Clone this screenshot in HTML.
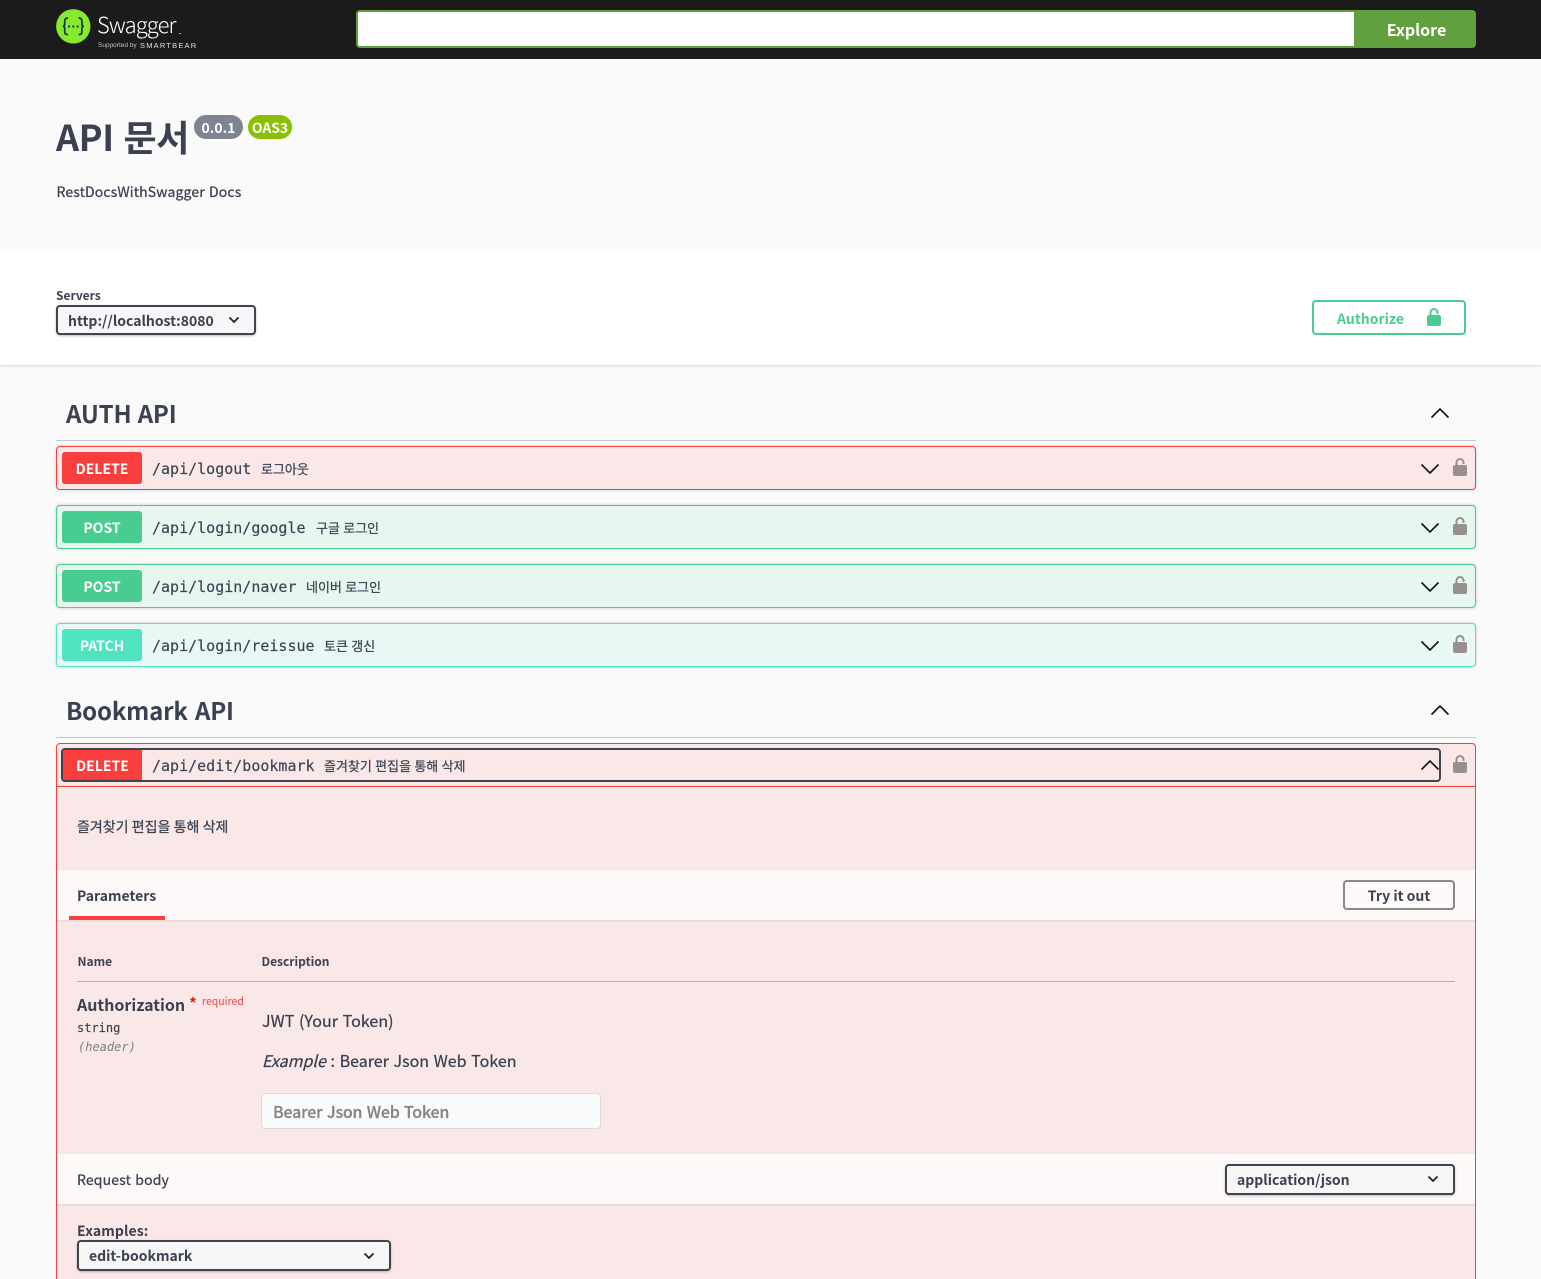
<!DOCTYPE html>
<html lang="en"><head><meta charset="utf-8"><title>Swagger UI</title>
<style>
*{box-sizing:border-box}
html,body{margin:0;padding:0;width:1541px;height:1279px;overflow:hidden;background:#fafafa}
body{position:relative;font-family:"Noto Sans CJK JP","Noto Sans CJK KR","Liberation Sans",sans-serif;color:#3b4151}
.a{position:absolute;white-space:nowrap}
.med{-webkit-text-stroke:.25px currentColor}
.bar{position:absolute;left:56px;width:1420px;height:44px;border:1px solid;border-radius:4px;box-shadow:0 0 3px rgba(0,0,0,.19)}
.del{border-color:#f93e3e;background:#fae8e8}
.post{border-color:#49cc90;background:#e8f6f0}
.patch{border-color:#50e3c2;background:#e9f8f5}
.m{position:absolute;left:62px;width:80px;height:32px;border-radius:3px;color:#fff;font-weight:700;font-size:14px;line-height:34px;text-align:center}
.p{position:absolute;left:152px;font-family:"DejaVu Sans Mono",monospace;font-size:15px;line-height:20px;white-space:nowrap;color:#3b4151;-webkit-text-stroke:.15px currentColor}
.s{position:absolute;font-size:13px;line-height:20px;white-space:nowrap;color:#3b4151;word-spacing:.4px;-webkit-text-stroke:.2px currentColor}
.h{position:absolute;font-size:24px;font-weight:700;line-height:32px;white-space:nowrap;letter-spacing:-.18px}
.line{position:absolute;left:56px;width:1420px;height:1px;background:#c6c7cc}
svg{position:absolute;display:block}
.sel{position:absolute;background:#f7f7f7;border:2px solid #41444e;border-radius:4px;box-shadow:0 1px 2px 0 rgba(0,0,0,.25);font-weight:700;font-size:14px;line-height:28px;padding-left:10px;white-space:nowrap}
</style></head><body>

<div class="a" style="left:0;top:0;width:1541px;height:59px;background:#1b1b1b"></div>
<svg style="left:56px;top:9px" width="35" height="35" viewBox="0 0 35 35"><circle cx="17.300" cy="17.300" r="17.200" fill="#85ea2d"/><path d="M12 9c-2.600 0-3.300 1.200-3.300 3.200v3.200c0 1.200-.8 1.900-2 1.900 1.200 0 2 .7 2 1.900v3.300c0 2 .7 3.200 3.300 3.200M22.600 9c2.600 0 3.300 1.200 3.300 3.200v3.200c0 1.200.8 1.900 2 1.900-1.200 0-2 .7-2 1.900v3.300c0 2-.7 3.200-3.300 3.200" fill="none" stroke="#173647" stroke-width="1.700"/><circle cx="13" cy="17.500" r="1.100" fill="#173647"/><circle cx="17.300" cy="17.500" r="1.100" fill="#173647"/><circle cx="21.600" cy="17.500" r="1.100" fill="#173647"/></svg>
<div class="a" style="left:97px;top:8px;font-size:22px;line-height:32px;color:#fff;font-weight:300;letter-spacing:-.9px">Swagger</div>
<div class="a" style="left:179px;top:33px;width:2px;height:1px;background:#aaa"></div>
<div class="a" style="left:98px;top:41px;font-size:6.500px;line-height:10px;color:#c4c4c4;font-family:'Liberation Sans',sans-serif">Supported by</div>
<div class="a" style="left:140px;top:40px;font-size:7.500px;line-height:11px;color:#e0e0e0;letter-spacing:1.200px;font-family:'Liberation Sans',sans-serif">SMARTBEAR</div>

<div class="a" style="left:356px;top:10px;width:1000px;height:38px;background:#fff;border:2px solid #62a03f;border-right:0;border-radius:4px 0 0 4px"></div>
<div class="a" style="left:1354px;top:10px;width:122px;height:38px;background:#62a03f;border-radius:0 4px 4px 0;color:#fff;font-size:16px;font-weight:700;line-height:38px;text-align:center;padding-left:3px">Explore</div>

<div class="h" style="left:56px;top:111px;font-size:36px;line-height:50px;letter-spacing:-.4px;word-spacing:2px">API 문서</div>
<div class="a" style="left:194px;top:115px;width:49px;height:24px;border-radius:12px;background:#7d8492;color:#fff;font-size:14px;font-weight:700;line-height:26px;text-align:center">0.0.1</div>
<div class="a" style="left:248px;top:115px;width:44px;height:24px;border-radius:12px;background:#89bf04;color:#fff;font-size:14px;font-weight:700;line-height:26px;text-align:center;letter-spacing:-.1px">OAS3</div>
<div class="a med" style="left:56.500px;top:182px;font-size:14px;line-height:21px;letter-spacing:.13px;word-spacing:1px">RestDocsWithSwagger Docs</div>

<div class="a" style="left:0;top:251px;width:1541px;height:114px;background:#fff;box-shadow:0 1px 2px 0 rgba(0,0,0,.15)"></div>
<div class="a" style="left:56px;top:287px;font-size:12px;font-weight:700;line-height:17px">Servers</div>
<div class="sel" style="left:56px;top:305px;width:200px;height:30px">http://localhost:8080</div>
<svg style="left:226px;top:314px" width="16" height="12" viewBox="0 0 16 12"><path d="M3.500 3.500 8 8l4.500-4.500" fill="none" stroke="#222" stroke-width="1.800"/></svg>

<div class="a" style="left:1312px;top:300px;width:154px;height:35px;border:2px solid #49cc90;border-radius:4px;background:#fff"></div>
<div class="a" style="left:1337px;top:309px;font-size:14px;font-weight:700;line-height:21px;color:#49cc90">Authorize</div>
<svg style="left:1425px;top:307px" width="18" height="20" viewBox="0 0 18 20"><path d="M5.500 9V5.500a3.500 3.500 0 0 1 7 0V7" fill="none" stroke="#49cc90" stroke-width="2"/><rect x="2" y="8" width="14" height="11" rx="2" fill="#49cc90"/></svg>

<!-- AUTH API -->
<div class="h" style="left:66px;top:397px;word-spacing:1px">AUTH API</div>
<svg style="left:1430px;top:404px" width="20" height="18" viewBox="0 0 20 18"><path d="M1.500 13.500 10 5l8.500 8.500" fill="none" stroke="#111" stroke-width="1.600"/></svg>
<div class="line" style="top:440px"></div>

<div class="bar del" style="top:446px"></div><div class="m" style="top:452px;background:#f93e3e">DELETE</div>
<div class="p" style="top:459px">/api/logout</div><div class="s" style="left:261px;top:459px">로그아웃</div>
<svg style="left:1420px;top:460px" width="20" height="18" viewBox="0 0 20 18"><path d="M1.500 4.500 10 13l8.500-8.500" fill="none" stroke="#111" stroke-width="1.600"/></svg>
<svg style="left:1452px;top:457px" width="16" height="20" viewBox="0 0 16 20"><path d="M4.500 9V5.500a3.500 3.500 0 0 1 7 0V7" fill="none" stroke="#988f8f" stroke-width="2"/><rect x="1" y="8" width="14" height="11" rx="2" fill="#988f8f"/></svg>

<div class="bar post" style="top:505px"></div><div class="m" style="top:511px;background:#49cc90">POST</div>
<div class="p" style="top:518px">/api/login/google</div><div class="s" style="left:316px;top:518px">구글 로그인</div>
<svg style="left:1420px;top:519px" width="20" height="18" viewBox="0 0 20 18"><path d="M1.500 4.500 10 13l8.500-8.500" fill="none" stroke="#111" stroke-width="1.600"/></svg>
<svg style="left:1452px;top:516px" width="16" height="20" viewBox="0 0 16 20"><path d="M4.500 9V5.500a3.500 3.500 0 0 1 7 0V7" fill="none" stroke="#988f8f" stroke-width="2"/><rect x="1" y="8" width="14" height="11" rx="2" fill="#988f8f"/></svg>

<div class="bar post" style="top:564px"></div><div class="m" style="top:570px;background:#49cc90">POST</div>
<div class="p" style="top:577px">/api/login/naver</div><div class="s" style="left:306px;top:577px">네이버 로그인</div>
<svg style="left:1420px;top:578px" width="20" height="18" viewBox="0 0 20 18"><path d="M1.500 4.500 10 13l8.500-8.500" fill="none" stroke="#111" stroke-width="1.600"/></svg>
<svg style="left:1452px;top:575px" width="16" height="20" viewBox="0 0 16 20"><path d="M4.500 9V5.500a3.500 3.500 0 0 1 7 0V7" fill="none" stroke="#988f8f" stroke-width="2"/><rect x="1" y="8" width="14" height="11" rx="2" fill="#988f8f"/></svg>

<div class="bar patch" style="top:623px"></div><div class="m" style="top:629px;background:#50e3c2">PATCH</div>
<div class="p" style="top:636px">/api/login/reissue</div><div class="s" style="left:324px;top:636px">토큰 갱신</div>
<svg style="left:1420px;top:637px" width="20" height="18" viewBox="0 0 20 18"><path d="M1.500 4.500 10 13l8.500-8.500" fill="none" stroke="#111" stroke-width="1.600"/></svg>
<svg style="left:1452px;top:634px" width="16" height="20" viewBox="0 0 16 20"><path d="M4.500 9V5.500a3.500 3.500 0 0 1 7 0V7" fill="none" stroke="#988f8f" stroke-width="2"/><rect x="1" y="8" width="14" height="11" rx="2" fill="#988f8f"/></svg>

<!-- Bookmark API -->
<div class="h" style="left:66px;top:694px;word-spacing:2px">Bookmark API</div>
<svg style="left:1430px;top:701px" width="20" height="18" viewBox="0 0 20 18"><path d="M1.500 13.500 10 5l8.500 8.500" fill="none" stroke="#111" stroke-width="1.600"/></svg>
<div class="line" style="top:737px"></div>

<div class="a" style="left:56px;top:743px;width:1420px;height:560px;border:1px solid #f93e3e;border-radius:4px;background:#fae8e8"></div>
<div class="a" style="left:57px;top:786px;width:1418px;height:1px;background:#f93e3e"></div>
<div class="a" style="left:61px;top:748px;width:1380px;height:34px;border:2px solid #41444e;border-radius:4px"></div>
<div class="m" style="top:750px;left:63px;width:79px;height:30px;line-height:32px;background:#f93e3e;border-radius:2px 0 0 2px">DELETE</div>
<div class="p" style="top:756px">/api/edit/bookmark</div><div class="s" style="left:324px;top:756px">즐겨찾기 편집을 통해 삭제</div>
<svg style="left:1420px;top:756px" width="20" height="18" viewBox="0 0 20 18"><path d="M1.500 13.500 10 5l8.500 8.500" fill="none" stroke="#111" stroke-width="1.600"/></svg>
<svg style="left:1452px;top:754px" width="16" height="20" viewBox="0 0 16 20"><path d="M4.500 9V5.500a3.500 3.500 0 0 1 7 0V7" fill="none" stroke="#988f8f" stroke-width="2"/><rect x="1" y="8" width="14" height="11" rx="2" fill="#988f8f"/></svg>

<div class="a med" style="left:77px;top:817px;font-size:14px;line-height:20px;word-spacing:.1px">즐겨찾기 편집을 통해 삭제</div>

<div class="a" style="left:57px;top:870px;width:1418px;height:50px;background:#fef9f9;box-shadow:0 1px 2px rgba(0,0,0,.1)"></div>
<div class="a" style="left:77px;top:886px;font-size:14px;font-weight:700;line-height:21px">Parameters</div>
<div class="a" style="left:69px;top:916px;width:96px;height:4px;background:#f93e3e"></div>
<div class="a" style="left:1343px;top:880px;width:112px;height:30px;border:2px solid #888;border-radius:4px;font-size:14px;font-weight:700;line-height:28px;text-align:center;background:#fef9f9">Try it out</div>

<div class="a" style="left:77.500px;top:953px;font-size:12px;font-weight:700;line-height:17px">Name</div>
<div class="a" style="left:261.500px;top:953px;font-size:12px;font-weight:700;line-height:17px">Description</div>
<div class="a" style="left:77px;top:981px;width:1378px;height:1px;background:#b5aeb0"></div>

<div class="a" style="left:77px;top:992px;font-size:16px;font-weight:700;line-height:24px">Authorization</div>
<div class="a" style="left:190px;top:995px;font-size:15px;font-weight:700;line-height:16px;color:#f00;font-family:'Liberation Sans',sans-serif">*</div>
<div class="a" style="left:202px;top:994px;font-size:10.500px;line-height:16px;color:#f93e3e;opacity:.85;-webkit-text-stroke:.15px currentColor">required</div>
<div class="a" style="left:77px;top:1020px;font-family:'DejaVu Sans Mono',monospace;font-size:12px;line-height:17px;-webkit-text-stroke:.15px currentColor">string</div>
<div class="a" style="left:78px;top:1039px;font-family:'DejaVu Sans Mono',monospace;font-size:12px;font-style:italic;line-height:16px;color:#7b7f88">(header)</div>

<div class="a med" style="left:262px;top:1008px;font-size:16px;line-height:24px;letter-spacing:.05px;word-spacing:1px">JWT (Your Token)</div>
<div class="a med" style="left:262px;top:1048px;font-size:16px;line-height:24px;word-spacing:1.100px"><i>Example</i> : Bearer Json Web Token</div>
<div class="a" style="left:261px;top:1093px;width:340px;height:36px;background:#fafafa;border:1px solid #d9d9d9;border-radius:4px;font-size:16px;font-weight:500;line-height:34px;padding-left:11px;color:#868686;letter-spacing:-.2px;word-spacing:1px;-webkit-text-stroke:.25px currentColor">Bearer Json Web Token</div>

<div class="a" style="left:57px;top:1154px;width:1418px;height:50px;background:#fef9f9;box-shadow:0 1px 2px rgba(0,0,0,.1)"></div>
<div class="a med" style="left:77px;top:1170px;font-size:14px;line-height:21px;letter-spacing:.15px;word-spacing:1px">Request body</div>
<div class="sel" style="left:1225px;top:1164px;width:230px;height:31px">application/json</div>
<svg style="left:1425px;top:1173px" width="16" height="12" viewBox="0 0 16 12"><path d="M3.500 3.500 8 8l4.500-4.500" fill="none" stroke="#222" stroke-width="1.800"/></svg>

<div class="a" style="left:77px;top:1221px;font-size:14px;font-weight:700;line-height:21px;letter-spacing:.1px">Examples:</div>
<div class="sel" style="left:77px;top:1240px;width:314px;height:31px">edit-bookmark</div>
<svg style="left:361px;top:1250px" width="16" height="12" viewBox="0 0 16 12"><path d="M3.500 3.500 8 8l4.500-4.500" fill="none" stroke="#222" stroke-width="1.800"/></svg>

</body></html>
